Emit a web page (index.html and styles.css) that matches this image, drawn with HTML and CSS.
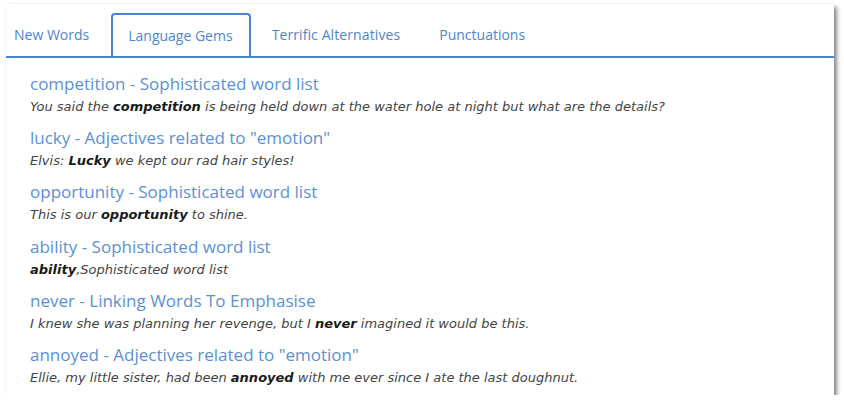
FILE: index.html
```html
<!DOCTYPE html>
<html>
<head>
<meta charset="utf-8">
<link rel="stylesheet" href="styles.css">
</head>
<body>
<div class="card">
  <ul class="tabs">
    <li class="tab">New Words</li>
    <li class="tab active">Language Gems</li>
    <li class="tab">Terrific Alternatives</li>
    <li class="tab">Punctuations</li>
  </ul>
  <div class="list">
    <div class="item">
      <div class="title">competition - Sophisticated word list</div>
      <div class="example">You said the <b>competition</b> is being held down at the water hole at night but what are the details?</div>
    </div>
    <div class="item">
      <div class="title">lucky - Adjectives related to "emotion"</div>
      <div class="example">Elvis: <b>Lucky</b> we kept our rad hair styles!</div>
    </div>
    <div class="item">
      <div class="title">opportunity - Sophisticated word list</div>
      <div class="example">This is our <b>opportunity</b> to shine.</div>
    </div>
    <div class="item">
      <div class="title">ability - Sophisticated word list</div>
      <div class="example"><b>ability</b>,Sophisticated word list</div>
    </div>
    <div class="item">
      <div class="title">never - Linking Words To Emphasise</div>
      <div class="example">I knew she was planning her revenge, but I <b>never</b> imagined it would be this.</div>
    </div>
    <div class="item">
      <div class="title">annoyed - Adjectives related to "emotion"</div>
      <div class="example">Ellie, my little sister, had been <b>annoyed</b> with me ever since I ate the last doughnut.</div>
    </div>
  </div>
</div>
</body>
</html>
```

FILE: styles.css
```css
html, body {
  margin: 0;
  padding: 0;
  background: #ffffff;
}
body {
  font-family: "Open Sans", "Noto Sans", sans-serif;
  padding: 4px 10px 0 6px;
  width: 828px;
  box-sizing: content-box;
}
.card {
  background: #fff;
  height: 391px;
  box-shadow: 3px 3px 4px rgba(0, 0, 0, 0.45), 0 0 2px rgba(0, 0, 0, 0.08);
  padding-top: 9px;
  box-sizing: border-box;
}
.tabs {
  list-style: none;
  margin: 0;
  padding: 0;
  display: flex;
  border-bottom: 2px solid #4a86cf;
  height: 43px;
}
.tab {
  font-size: 14px;
  color: #4f86c9;
  display: flex;
  align-items: center;
  box-sizing: border-box;
  height: 43px;
  padding-bottom: 1px;
}
.tab:first-child {
  padding-left: 8px;
  padding-right: 19px;
  margin-right: 3px;
}
.tab.active {
  border: 2px solid #4a86cf;
  border-bottom: none;
  border-radius: 4px 4px 0 0;
  padding: 0 16px 1px 15px;
  margin-right: 21px;
}
.tab:nth-child(3) {
  margin-right: 39px;
  letter-spacing: 0.1px;
}
.list {
  padding: 15px 0 0 24px;
}
.item {
  height: 54.2px;
}
.title {
  font-size: 17px;
  color: #5b91d2;
  line-height: 22px;
}
.example {
  font-family: "DejaVu Sans", "Open Sans", sans-serif;
  font-size: 13px;
  font-style: italic;
  color: #444444;
  line-height: 20px;
  margin-top: 2px;
}
.example b {
  color: #1a1a1a;
  font-weight: 700;
}
```
